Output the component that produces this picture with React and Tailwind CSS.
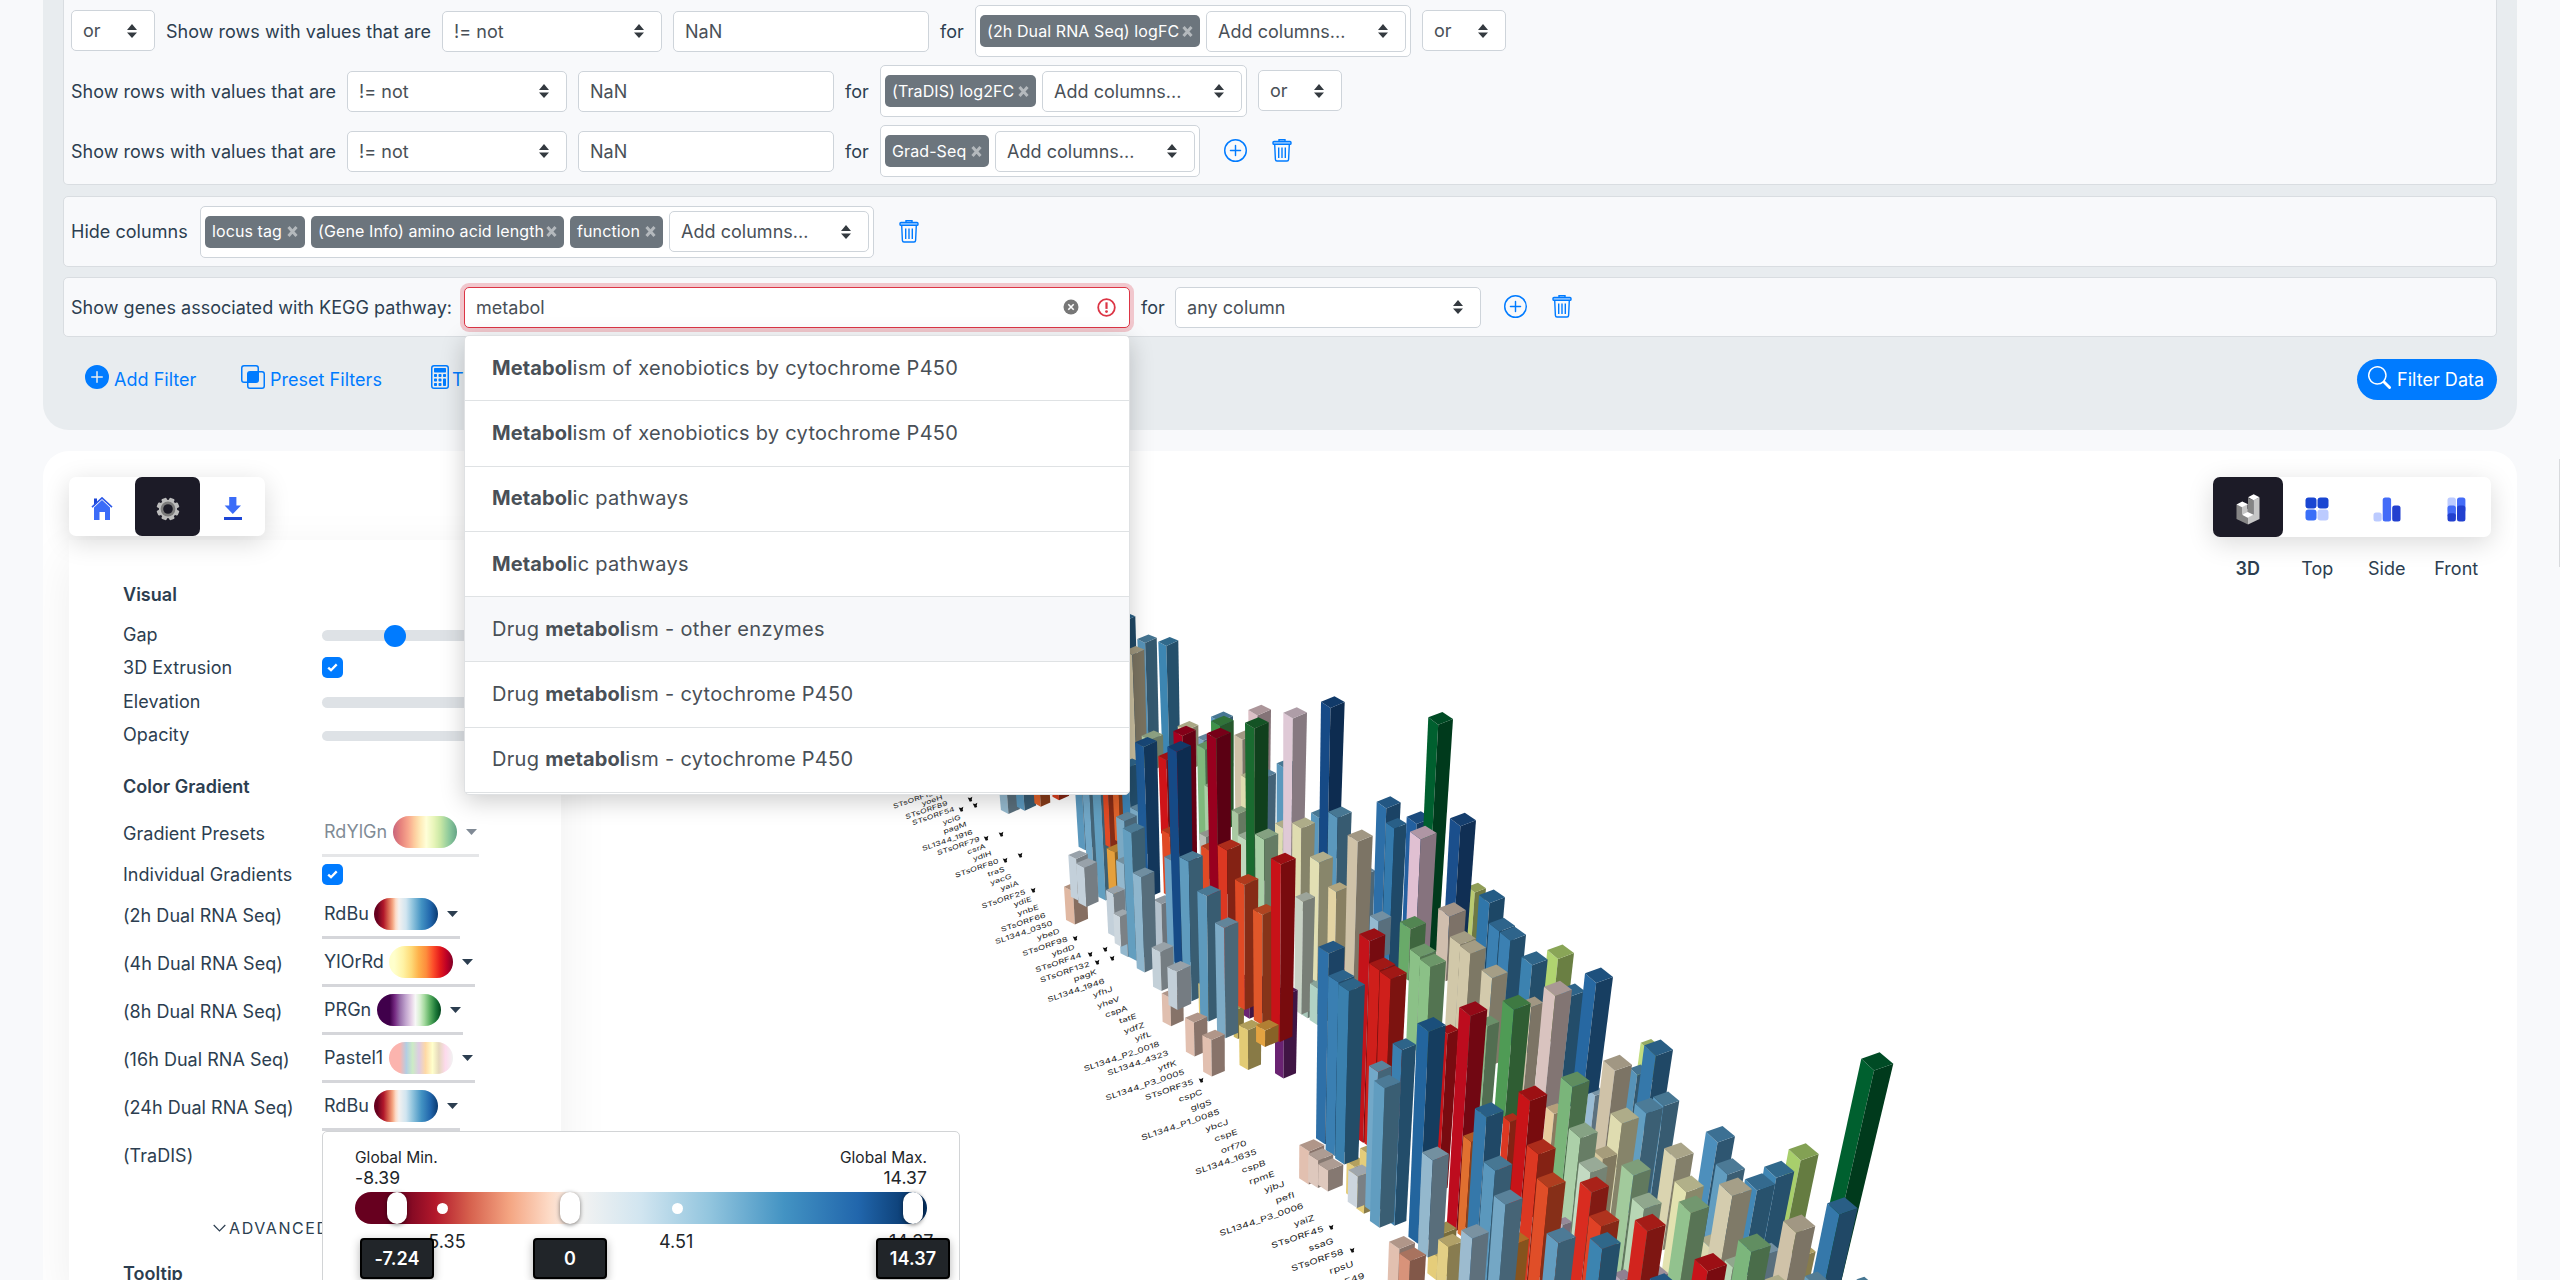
import React from "react";
import { BsPlusCircle, BsPlusCircleFill, BsIntersect, BsCalculator, BsSearch } from "react-icons/bs";

function Sorter() {
  return (
    <svg width="10" height="14" viewBox="0 0 10 14" className="mr-px shrink-0">
      <path d="M0 6L5 0L10 6Z M0 8.5L5 14L10 8.5Z" fill="#343a40" />
    </svg>
  );
}

function Select({ children, className }) {
  return (
    <div className={"flex h-[41px] shrink-0 items-center justify-between rounded-[5px] border border-[#ced4da] bg-white pl-[11px] pr-4 text-[#495057] " + className}>
      <span>{children}</span>
      <Sorter />
    </div>
  );
}

function TextInput() {
  return (
    <div className="flex h-[41px] w-64 shrink-0 items-center rounded-[5px] border border-[#ced4da] bg-white pl-[11px] text-[#495057]">NaN</div>
  );
}

function Tag({ children, className }) {
  return (
    <div className={"flex h-8 shrink-0 items-center justify-between whitespace-nowrap rounded-[5px] bg-[#6c757d] px-[7px] text-[16px] tracking-[0.1px] text-white " + className}>
      <span>{children}</span>
      <svg width="11" height="13" viewBox="0 0 11 13" className="shrink-0">
        <path d="M1.5 2L9.5 11M9.5 2L1.5 11" stroke="#b4b9bd" strokeWidth="3" />
      </svg>
    </div>
  );
}

function TagBox({ children }) {
  return (
    <div className="flex h-[52px] shrink-0 items-center gap-[6px] rounded-[5px] border border-[#ced4da] bg-white px-1">
      {children}
      <Select className="w-[200px]">Add columns...</Select>
    </div>
  );
}

function Trash() {
  return (
    <svg width="20" height="23" viewBox="0 0 20 23" fill="none" stroke="#007bff" strokeWidth="1.4">
      <path d="M7 2.2V.8h6v1.4" />
      <rect x="1" y="2.4" width="18" height="3" rx="1" fill="#7dbbff" />
      <path d="M2.7 5.5L3.4 20.4Q3.5 22 5 22H15Q16.5 22 16.6 20.4L17.3 5.5" />
      <path d="M6.7 8.5V19M10 8.5V19M13.3 8.5V19" />
    </svg>
  );
}

const SENTENCE = "Show rows with values that are";

function Sentence() {
  return (
    <>
      <span className="w-[265px] shrink-0 whitespace-nowrap">{SENTENCE}</span>
      <Select className="w-[220px]">!= not</Select>
      <TextInput />
      <span className="w-[24px] shrink-0">for</span>
    </>
  );
}

function Filters() {
  return (
    <section className="flex h-[430px] flex-col rounded-b-[26px] bg-[#e8ecef] px-5">
      <div className="h-[185px] rounded-b-[5px] border border-t-0 border-[#d9dde1] bg-[#f8f9fb] px-[7px] pt-px">
        <div className="flex h-[60px] items-center gap-[11px]">
          <Select className="-mt-px w-[84px]">or</Select>
          <Sentence />
          <TagBox><Tag className="w-[220px]">(2h Dual RNA Seq) logFC</Tag></TagBox>
          <Select className="-mt-px w-[84px]">or</Select>
        </div>
        <div className="flex h-[60px] items-center gap-[11px]">
          <Sentence />
          <TagBox><Tag className="w-[151px]">(TraDIS) log2FC</Tag></TagBox>
          <Select className="-mt-px w-[84px]">or</Select>
        </div>
        <div className="flex h-[60px] items-center gap-[11px]">
          <Sentence />
          <TagBox><Tag className="w-[104px]">Grad-Seq</Tag></TagBox>
          <div className="-mt-[2px] ml-[13px] flex items-center gap-[25px]"><BsPlusCircle size={23} color="#007bff" /><Trash /></div>
        </div>
      </div>
      <div className="mt-[11px] flex h-[71px] items-center gap-[12px] rounded-[5px] border border-[#d9dde1] bg-[#f8f9fb] px-[7px]">
        <span className="w-[117px] whitespace-nowrap">Hide columns</span>
        <TagBox>
          <Tag className="w-[100px]">locus tag</Tag>
          <Tag className="w-[253px]">(Gene Info) amino acid length</Tag>
          <Tag className="w-[93px]">function</Tag>
        </TagBox>
        <div className="ml-[13px]"><Trash /></div>
      </div>
      <div className="relative mt-[10px] flex h-[60px] items-center gap-[11px] rounded-[5px] border border-[#d9dde1] bg-[#f8f9fb] px-[7px]">
        <span className="w-[382px] shrink-0 whitespace-nowrap">Show genes associated with KEGG pathway:</span>
        <div className="flex h-[41px] w-[666px] shrink-0 items-center rounded-[5px] border-[1.5px] border-[#dc3545] bg-white pl-[11px] pr-[13px] text-[#495057] ring-4 ring-[#dc3545]/25">
          <span className="grow">metabol</span>
          <svg width="16" height="16" viewBox="0 0 16 16"><circle cx="8" cy="8" r="7.5" fill="#777" /><path d="M5.3 5.3l5.4 5.4M10.7 5.3l-5.4 5.4" stroke="#fff" strokeWidth="1.6" /></svg>
          <svg width="19" height="19" viewBox="0 0 19 19" className="ml-[18px]"><circle cx="9.5" cy="9.5" r="8.3" fill="none" stroke="#dc3545" strokeWidth="1.8" /><path d="M9.5 4.3v6.6" stroke="#dc3545" strokeWidth="2.2" /><circle cx="9.5" cy="13.6" r="1.4" fill="#dc3545" /></svg>
        </div>
        <span className="w-[23px]">for</span>
        <Select className="w-[306px]">any column</Select>
        <div className="-mt-[2px] ml-[12px] flex items-center gap-[25px]"><BsPlusCircle size={23} color="#007bff" /><Trash /></div>
        <Suggestions />
      </div>
      <div className="mt-[21px] flex h-[42px] items-center pl-[22px] text-[#007bff]">
        <div className="flex w-[156px] items-center gap-[5px]"><BsPlusCircleFill size={24} className="-mt-1" />Add Filter</div>
        <div className="flex w-[187px] items-center gap-[5px]"><BsIntersect size={24} className="-mt-1" />Preset Filters</div>
        <div className="flex grow items-center"><BsCalculator size={24} className="-mt-1" />T</div>
        <div className="flex h-[41px] w-[140px] items-center gap-[6px] rounded-full bg-[#007bff] pl-[11px] text-white"><BsSearch size={23} className="-mt-1 shrink-0" /><span className="whitespace-nowrap">Filter Data</span></div>
      </div>
    </section>
  );
}

const SUGGESTIONS = [
  ["", "Metabol", "ism of xenobiotics by cytochrome P450"],
  ["", "Metabol", "ism of xenobiotics by cytochrome P450"],
  ["", "Metabol", "ic pathways"],
  ["", "Metabol", "ic pathways"],
  ["Drug ", "metabol", "ism - other enzymes"],
  ["Drug ", "metabol", "ism - cytochrome P450"],
  ["Drug ", "metabol", "ism - cytochrome P450"],
];

function Suggestions() {
  return (
    <div className="absolute left-[400px] top-[57px] z-20 w-[666px] overflow-hidden rounded-[5px] border border-[#dfe1e3] bg-white pb-px text-[20px] tracking-[0.29px] text-[#495057] shadow-[0_6px_24px_rgba(0,0,0,0.2)]">
      {SUGGESTIONS.map(([before, hit, after], i) => (
        <div key={i} className={"flex h-[65.3px] items-center whitespace-pre border-b border-[#dfe2e4] pl-[27px] " + (i === 4 ? "bg-[#f7f8fa]" : "")}>
          {before}<b className="font-bold tracking-[0.1px]">{hit}</b>{after}
        </div>
      ))}
    </div>
  );
}

/* ---------- 3D bar scene ---------- */

// Bars are [left, top, width, base, colour], listed from back to front.
// Each cluster has its own origin and counts three units to a pixel.
const CLUSTERS = [
  { ox: 860, oy: 580, bars: [
    [410, 540, 60, 690, "#94b8cd"], [460, 540, 60, 680, "#5b98bd"],
    [514, 540, 50, 670, "#e0622b"], [570, 540, 52, 650, "#d9401f"],
    [640, 540, 55, 800, "#5b98bd"], [662, 540, 55, 880, "#72a8c8"], [692, 540, 64, 950, "#629fc0"],
    [612, 920, 68, 1020, "#e0b8a2"], [625, 825, 58, 950, "#c3d0da"], [648, 850, 63, 968, "#c3d0da"],
    [748, 540, 55, 860, "#e04a25"], [755, 808, 55, 940, "#e5a03c"],
  ] },
  { ox: 1110, oy: 600, bars: [
    [18, 52, 58, 500, "#3578a8"], [82, 117, 58, 500, "#5793b8"], [145, 125, 60, 500, "#3d86b2"],
    [43, 152, 60, 490, "#cbc0a0"], [262, 412, 45, 560, "#7fabc8"], [303, 350, 66, 600, "#5b98bd"],
    [415, 330, 68, 700, "#dcc0c6"], [203, 378, 62, 500, "#dad7ac"], [95, 407, 64, 500, "#b2cca6"],
    [440, 520, 58, 740, "#6fa3c4"], [500, 490, 60, 740, "#5b98bd"],
    [373, 405, 60, 700, "#cfc2a8"], [392, 525, 60, 700, "#dfdcb0"], [261, 435, 62, 720, "#7fb87c"],
    [303, 363, 68, 680, "#3f9249"], [283, 555, 55, 740, "#a9cfa6"],
    [-22, 570, 42, 735, "#e04a25"], [8, 570, 45, 720, "#e0622b"], [-10, 745, 60, 870, "#e5a03c"],
    [145, 468, 60, 700, "#cf1418"], [190, 393, 67, 780, "#a8001f"], [32, 490, 60, 760, "#3b80b0"],
    [60, 622, 60, 760, "#7aa9c4"], [18, 650, 62, 1000, "#7aa9c4"], [130, 900, 60, 1060, "#b4c2cd"],
    [155, 690, 60, 880, "#e04a25"], [75, 427, 66, 880, "#1f5b97"], [268, 700, 50, 830, "#b8bdb5"],
    [365, 630, 50, 830, "#a9c9a2"], [383, 705, 64, 850, "#c0d8bd"], [273, 738, 60, 880, "#e04a25"],
    [290, 400, 72, 880, "#98001f"], [405, 368, 71, 840, "#1a6b30"],
    [495, 670, 60, 790, "#dfdcb0"], [520, 338, 71, 780, "#dfc9d6"],
    [603, 638, 60, 780, "#5b98bd"], [633, 305, 71, 770, "#164a86"], [655, 635, 70, 880, "#5b98bd"],
    [435, 702, 70, 930, "#a9cfa6"], [547, 668, 68, 920, "#dfdcb0"],
    [600, 770, 69, 1160, "#e2dfb3"], [655, 860, 60, 1100, "#e3d3a3"],
    [665, 1095, 65, 1200, "#b8a0a2"], [745, 810, 50, 1000, "#7fabc8"],
    [800, 605, 72, 1000, "#2d6fa8"], [828, 668, 62, 1150, "#347aad"], [890, 650, 75, 1040, "#2360a0"],
    [955, 352, 74, 1050, "#00602f"], [900, 695, 80, 1070, "#e0c0d2"],
    [1072, 860, 56, 1020, "#b9ca70"], [1020, 655, 78, 1010, "#1b4f8c"],
    [1107, 885, 78, 1200, "#3076aa"], [1137, 970, 78, 1260, "#3b80b2"], [1170, 997, 78, 1320, "#3b80b2"],
    [1312, 1050, 80, 1300, "#b0d470"], [1235, 1070, 78, 1340, "#3c82b0"],
    [780, 947, 64, 1060, "#94b9d0"], [920, 1060, 65, 1100, "#94b9d0"],
    [713, 705, 75, 1150, "#cfc2a8"],
    [985, 925, 83, 1120, "#d0beae"], [1020, 1010, 78, 1330, "#d1c8a9"], [1050, 1037, 78, 1380, "#d1c8a9"],
    [870, 965, 78, 1120, "#69aa69"], [900, 1048, 78, 1330, "#8bc187"], [930, 1078, 78, 1380, "#8bc187"],
    [1115, 1110, 78, 1380, "#d3caac"],
    [18, 780, 60, 1060, "#94b8cd"], [-12, 870, 56, 1000, "#c3d0da"], [10, 940, 50, 1030, "#cdd7de"],
    [38, 685, 66, 1070, "#639ebf"], [68, 818, 65, 1105, "#8fb6cd"],
    [163, 770, 60, 1100, "#6ca2c4"], [172, 440, 71, 1085, "#164a86"], [208, 770, 70, 1190, "#5f9bbe"],
    [155, 1180, 65, 1265, "#e0bfaf"], [265, 1150, 60, 1250, "#e5cd7a"],
    [125, 1042, 65, 1160, "#c3d0d8"], [172, 1100, 70, 1215, "#c3cfd8"],
    [390, 1130, 70, 1240, "#6a2372"], [370, 1220, 32, 1310, "#cdb860"],
    [323, 735, 70, 1180, "#dc3822"], [375, 838, 70, 1215, "#e04a25"], [429, 928, 70, 1260, "#e0572a"],
    [570, 1150, 60, 1240, "#a6c6b8"], [555, 890, 60, 1230, "#c8d2c5"],
    [600, 1150, 60, 1260, "#b1d2c4"],
    [262, 873, 70, 1250, "#5e9abd"], [315, 968, 70, 1300, "#7dabc6"],
    [495, 1170, 68, 1420, "#6a2372"],
    [387, 1275, 67, 1395, "#e2cb75"], [483, 775, 74, 1310, "#c81218"], [438, 1275, 68, 1325, "#e3a341"],
    [225, 1253, 67, 1355, "#e2c0b0"], [277, 1305, 67, 1415, "#e2c0b0"],
  ] },
  { ox: 1400, oy: 1020, bars: [
    [485, -95, 70, 250, "#3b80b0"], [565, 210, 50, 330, "#9abcd4"], [555, -140, 84, 200, "#2768a2"],
    [370, -58, 60, 260, "#cfc2a8"], [432, -100, 84, 240, "#d9c3bf"],
    [238, 0, 60, 300, "#88b887"], [308, -58, 84, 290, "#4f9b55"],
    [722, 68, 55, 170, "#c2dd80"], [690, 145, 55, 350, "#5793b8"], [733, 76, 86, 300, "#3578aa"],
    [760, 230, 78, 560, "#5b98bd"], [705, 250, 84, 560, "#629ec1"], [610, 122, 86, 430, "#cfc2a8"],
    [438, 262, 60, 430, "#e8cc9e"], [632, 280, 85, 600, "#dfdcb0"], [580, 392, 72, 620, "#d5c89e"],
    [483, 172, 86, 520, "#7ab57a"], [507, 325, 86, 640, "#acd0a9"], [537, 428, 86, 700, "#c3dac2"],
    [918, 335, 87, 640, "#4d8fbc"], [948, 432, 87, 700, "#629dc0"],
    [793, 385, 88, 660, "#dad4b0"], [824, 484, 88, 800, "#e3e2b0"],
    [1166, 388, 90, 680, "#a8cf6c"], [1384, 116, 96, 860, "#00602f"],
    [1093, 440, 90, 740, "#3f86b4"], [1035, 478, 90, 740, "#4388b6"],
    [1080, 680, 60, 800, "#94b9d0"], [900, 655, 78, 790, "#dcd9b0"], [958, 492, 98, 760, "#d4ccae"],
    [310, 290, 50, 560, "#dc3822"], [356, 215, 86, 580, "#c81418"], [381, 375, 86, 760, "#dc3822"],
    [470, 600, 45, 700, "#c0b0c4"], [411, 475, 86, 850, "#e04e28"],
    [665, 435, 88, 790, "#a2ca9c"], [697, 535, 88, 850, "#b8d6b5"],
    [540, 487, 87, 850, "#d92c20"], [568, 588, 90, 850, "#e04226"],
    [640, 760, 60, 850, "#b8a4ba"], [745, 750, 60, 850, "#c8b6c4"],
    [1185, 685, 62, 850, "#e0cd80"], [975, 720, 60, 850, "#b8d6b5"], [1150, 603, 96, 850, "#cfc2a8"],
    [1015, 660, 98, 850, "#7cb67c"], [836, 545, 92, 850, "#92c28e"], [705, 600, 92, 850, "#d2241e"],
    [884, 718, 97, 850, "#c8131a"], [1282, 550, 91, 880, "#3578aa"], [1215, 768, 66, 850, "#6a9fbe"],
    [1095, 778, 70, 850, "#dfdcb0"], [1370, 778, 40, 850, "#5b98bd"],
    [-122, -258, 78, 350, "#c4131a"], [-92, -170, 78, 370, "#cf1f1b"], [-60, -145, 80, 400, "#cf1f1b"],
    [-160, 425, 60, 520, "#e5cd7a"], [-120, 385, 60, 460, "#e5cd7a"],
    [-245, -220, 79, 355, "#2e70a8"], [-215, -133, 78, 390, "#3a7fb2"], [-185, -108, 80, 415, "#3a80ae"],
    [-302, 375, 75, 475, "#e2c0b0"], [-275, 402, 75, 485, "#dec8bd"], [-245, 432, 75, 495, "#dec8bd"],
    [-130, 490, 60, 565, "#e5cd7a"], [-155, 450, 72, 545, "#ccd5de"],
    [-93, 137, 68, 560, "#72a8c8"], [-22, 70, 70, 600, "#3b80b0"], [-78, 182, 80, 603, "#619dc0"],
    [120, 25, 56, 500, "#c8131a"], [178, -38, 84, 610, "#bd0c1e"],
    [100, 620, 70, 740, "#c8b464"], [85, 690, 70, 760, "#e5cd7a"],
    [190, 347, 60, 640, "#e07030"], [52, 10, 85, 650, "#23659e"], [66, 397, 81, 690, "#94b8cd"],
    [325, 650, 62, 850, "#e08a30"], [225, 265, 86, 820, "#3578aa"], [251, 425, 86, 850, "#5b98bd"],
    [282, 527, 86, 850, "#74a7c5"], [115, 658, 76, 850, "#e3cf85"],
    [184, 630, 82, 850, "#9cbbcf"], [440, 640, 87, 850, "#639dc0"], [570, 655, 92, 850, "#3c84b0"],
    [750, 775, 76, 850, "#2e70a8"],
    [-33, 665, 78, 850, "#e2c0b0"], [-2, 700, 80, 850, "#d8937a"],
  ] },
];

function shade(hex, k) {
  const n = parseInt(hex.slice(1), 16);
  return "rgb(" + [n >> 16, (n >> 8) & 255, n & 255].map((v) => Math.round(v * k)).join(",") + ")";
}

// Side-corner drop of the top face, interpolated along the screen's width.
function tilt(x) {
  const t = Math.min(Math.max((x - 1150) / 500, 0), 1);
  return { right: -0.06 + 0.22 * t, front: 0.21 + 0.16 * t, back: -0.24 + 0.04 * t };
}

function lean(x) {
  return x < 1430 ? -(x - 1277) * 0.0003 : -0.046 - (x - 1430) * 0.0004;
}

function Bar({ x, y, w, base, color }) {
  const a = tilt(x);
  const h = base - y;
  const s = lean(x) * h;
  const taper = 1 - Math.min((0.02 * h) / w, 0.25);
  const L = [x, y];
  const B = [x + 0.57 * w, y + a.back * w];
  const R = [x + w, y + a.right * w];
  const F = [x + 0.4 * w, y + a.front * w];
  const L2 = [x + s, base];
  const R2 = [x + s + w * taper, base + a.right * w * taper];
  const F2 = [x + s + 0.4 * w * taper, base + a.front * w * taper];
  const p = (...pts) => pts.map((q) => q[0].toFixed(1) + "," + q[1].toFixed(1)).join(" ");
  return (
    <g>
      <polygon points={p(L, F, F2, L2)} fill={color} />
      <polygon points={p(F, R, R2, F2)} fill={shade(color, 0.6)} />
      <polygon points={p(L, B, R, F)} fill={shade(color, 0.78)} />
    </g>
  );
}

// Gene labels as [name, right end, baseline].
const LABELS = [
  ["STsORF131", 937, 794], ["yoeH", 943, 799], ["STsORF89", 948, 805], ["STsORF54", 955, 811], ["yciG", 961, 819], ["pagM", 967, 826],
  ["SL1344_1916", 973, 834], ["STsORF79", 980, 841], ["csrA", 986, 848], ["ydiH", 992, 855], ["STsORF80", 999, 863],
  ["traS", 1005, 871], ["yacG", 1012, 878], ["yaiA", 1019, 885], ["STsORF25", 1026, 894], ["ydiE", 1032, 901],
  ["ynbE", 1039, 909], ["STsORF66", 1046, 917], ["SL1344_0350", 1053, 925], ["ybeD", 1060, 933], ["STsORF98", 1068, 941],
  ["ybdD", 1075, 949], ["STsORF44", 1082, 957], ["STsORF132", 1090, 966], ["pagK", 1097, 974],
  ["SL1344_1946", 1105, 983], ["yfhJ", 1113, 991], ["yheV", 1120, 1001], ["cspA", 1128, 1010], ["tatE", 1137, 1018],
  ["ydfZ", 1145, 1027], ["yifL", 1152, 1036], ["SL1344_P2_0018", 1160, 1046], ["SL1344_4323", 1169, 1055], ["ytfK", 1177, 1065],
  ["SL1344_P3_0005", 1185, 1074], ["STsORF35", 1194, 1084], ["cspC", 1203, 1094], ["glgS", 1212, 1104], ["SL1344_P1_0085", 1220, 1114],
  ["ybcJ", 1229, 1124], ["cspE", 1238, 1134], ["orf70", 1247, 1145], ["SL1344_1635", 1257, 1154], ["cspB", 1266, 1165],
  ["rpmE", 1275, 1176], ["yjbJ", 1285, 1186], ["pefI", 1295, 1197], ["SL1344_P3_0006", 1304, 1208], ["yaiZ", 1315, 1220],
  ["STsORF45", 1324, 1231], ["ssaG", 1334, 1243], ["STsORF58", 1344, 1254], ["rpsU", 1354, 1266], ["STsORF49", 1365, 1278],
];

const MARKS = [
  [970, 799], [961, 809], [975, 805], [986, 838], [1001, 834], [1005, 860], [1020, 855], [1033, 890], [1069, 909],
  [1075, 938], [1090, 954], [1105, 949], [1097, 962], [1112, 958], [1201, 1080], [1331, 1227], [1352, 1250],
];

function Scene() {
  return (
    <svg className="pointer-events-none absolute left-0 top-0" width="2474" height="829" viewBox="43 451 2474 829">
      <g fontFamily="Inter, sans-serif" fill="#222" fontWeight="400">
        {LABELS.map(([name, x, y]) => (
          <text key={name} fontSize={6.1 + (y - 790) * 0.0034} textAnchor="end" transform={"matrix(1.36 -0.46 0.25 1 " + x + " " + y + ")"}>{name}</text>
        ))}
      </g>
      <g fill="#111">
        {MARKS.map(([x, y]) => (
          <path key={x + "-" + y} d={"M" + (x - 2.3) + " " + (y - 1.5) + "l2.4 .6 2.2-1.4-.6 3 .5 1.2-2.4.9z"} />
        ))}
      </g>
      {CLUSTERS.map((c, i) => (
        <g key={i}>
          {c.bars.map(([x, y, w, base, color], j) => (
            <Bar key={j} x={c.ox + x / 3} y={c.oy + y / 3} w={w / 3} base={c.oy + base / 3} color={color} />
          ))}
        </g>
      ))}
    </svg>
  );
}

/* ---------- Settings ---------- */

const RDBU = "bg-[linear-gradient(90deg,#67001f_5%,#b2182b_15%,#d6604d_22%,#f4a582_29%,#fddbc7_34%,#f3f1f0_39%,#d1e5f0_50%,#92c5de_60%,#4393c3_74%,#2166ac_88%,#0a3a70_100%)]";
const RAMPS = [
  ["(2h Dual RNA Seq)", "RdBu", RDBU],
  ["(4h Dual RNA Seq)", "YlOrRd", "bg-[linear-gradient(90deg,#ffffcc_8%,#fff3a5_22%,#fed976_35%,#feb24c_46%,#fd8d3c_58%,#fc4e2a_69%,#e31a1c_80%,#bd0026_90%,#800026_100%)]"],
  ["(8h Dual RNA Seq)", "PRGn", "bg-[linear-gradient(90deg,#40004b_20%,#762a83_28%,#9970ab_36%,#c2a5cf_45%,#e7d4e8_54%,#f7f7f7_60%,#d9f0d3_67%,#a6dba0_74%,#5aae61_83%,#1b7837_92%,#00441b_100%)]"],
  ["(16h Dual RNA Seq)", "Pastel1", "bg-[linear-gradient(90deg,#fbb4ae_17%,#b3cde3_27%,#ccebc5_37%,#decbe4_47%,#fed9a6_57%,#ffffcc_68%,#e5d8bd_78%,#fddaec_88%,#f2f2f2_100%)]"],
  ["(24h Dual RNA Seq)", "RdBu", RDBU],
];

function Ramp({ name, ramp, className }) {
  return (
    <div className={"flex h-[47px] items-center border-b-[3px] border-[#d5d6da] pl-[2px] pr-[2px] " + className}>
      <span className="mb-px">{name}</span>
      <span className={"ml-[5.5px] h-8 w-16 rounded-full " + ramp} />
      <svg width="11" height="6" viewBox="0 0 11 6" className="ml-[9px]"><path d="M0 0H11L5.5 6Z" fill="#2c3e50" /></svg>
    </div>
  );
}

function Check() {
  return (
    <span className="flex size-[21px] items-center justify-center rounded-[5px] bg-[#007bff]">
      <svg width="11" height="9" viewBox="0 0 11 9"><path d="M1.2 4.6L4 7.2L9.7 1.4" fill="none" stroke="#fff" strokeWidth="2.3" /></svg>
    </span>
  );
}

function Row({ label, className = "h-[33.5px]", children }) {
  return (
    <div className={"flex items-center " + className}>
      <span className="w-[199px] shrink-0">{label}</span>
      {children}
    </div>
  );
}

function Track({ thumb }) {
  return (
    <div className="relative mt-[2px] h-[10.5px] w-[180px] rounded-full bg-[#dee2e6]">
      {thumb && <span className="absolute -top-[5px] left-[62px] size-[22px] rounded-full bg-[#007bff]" />}
    </div>
  );
}

function Settings() {
  return (
    <div className="relative z-10 h-[760px] w-[492px] bg-white pl-[54px] pt-[38px] shadow-[0_16px_48px_rgba(0,0,0,0.07)]">
      <h3 className="h-[34px] font-semibold leading-[34px]">Visual</h3>
      <div className="mt-[5.5px]">
        <Row label="Gap"><Track thumb /></Row>
        <Row label="3D Extrusion"><Check /></Row>
        <Row label="Elevation"><Track /></Row>
        <Row label="Opacity"><Track /></Row>
      </div>
      <h3 className="mt-[18.5px] h-[34px] font-semibold leading-[34px]">Color Gradient</h3>
      <Row label="Gradient Presets" className="mt-[5px] h-[48px]">
        <Ramp name="RdYlGn" className="opacity-60" ramp="bg-[linear-gradient(90deg,#a50026,#d73027_12%,#f46d43_24%,#fdae61_34%,#fee08b_43%,#ffffbf_52%,#d9ef8b_64%,#a6d96a_74%,#3fa55a_88%,#006837)]" />
      </Row>
      <Row label="Individual Gradients" className="h-[34px]"><Check /></Row>
      {RAMPS.map(([label, name, ramp]) => (
        <Row key={label} label={label} className="h-[48px]"><Ramp name={name} ramp={ramp} className="" /></Row>
      ))}
      <Row label="(TraDIS)" className="h-[48px]" />
      <div className="mt-[34px] flex h-[30px] items-center gap-[3px] pl-[90px] text-[16px] tracking-[1.6px]">
        <svg width="13" height="8" viewBox="0 0 13 8"><path d="M.7 1L6.5 7L12.3 1" fill="none" stroke="#2c3e50" strokeWidth="1.2" /></svg>
        ADVANCED
      </div>
      <h3 className="mt-[14px] h-[34px] font-semibold leading-[34px]">Tooltip</h3>
      <RangePopover />
    </div>
  );
}

function Handle({ className, value }) {
  return (
    <div className={"absolute top-0 flex w-[74px] flex-col items-center " + className}>
      <span className="h-8 w-5 rounded-full bg-white shadow-[0_1px_4px_rgba(0,0,0,0.5)]" />
      <span className="mt-[14px] flex h-[41px] w-[74px] items-center justify-center rounded-[4px] border-2 border-black bg-[#212529] text-[18px] font-semibold text-white shadow-[0_3px_10px_rgba(0,0,0,0.3)]">{value}</span>
    </div>
  );
}

function RangePopover() {
  return (
    <div className="absolute left-[253px] top-[591px] h-[200px] w-[638px] rounded-[5px] border border-[#d2d4d6] bg-white px-8 pt-[16px] text-[#212529]">
      <div className="flex justify-between text-[15.5px] leading-[20px]">
        <div>Global Min.<div className="text-[17.5px] tracking-[0.1px]">-8.39</div></div>
        <div className="text-right">Global Max.<div className="text-[17.5px] tracking-[0.1px]">14.37</div></div>
      </div>
      <div className="relative mt-[4px] h-8 w-[572px] rounded-full bg-[linear-gradient(90deg,#67001f_7%,#b2182b_14%,#d6604d_20%,#f4a582_27%,#fddbc7_34%,#f4f3f2_39%,#d1e5f0_50%,#92c5de_62%,#4393c3_75%,#2166ac_88%,#053061_99%)]">
        <span className="absolute left-[82px] top-[11px] size-[11px] rounded-full bg-white" />
        <span className="absolute left-[317px] top-[11px] size-[11px] rounded-full bg-white" />
        <span className="absolute left-[65px] top-[38px] text-[18px] leading-6">-5.35</span>
        <span className="absolute left-[304px] top-[38px] text-[18px] leading-6">4.51</span>
        <span className="absolute left-[534px] top-[38px] text-[18px] leading-6">14.37</span>
        <Handle className="left-[5px]" value="-7.24" />
        <Handle className="left-[178px]" value="0" />
        <Handle className="left-[521px]" value="14.37" />
      </div>
    </div>
  );
}

function HomeIcon() {
  return (
    <svg width="22" height="23" viewBox="0 0 22 23">
      <path d="M3 1.5H6V6L3 9Z" fill="#1c46d6" />
      <path d="M1 10.2L11 .9L21 10.2" fill="none" stroke="#2b57e8" strokeWidth="1.6" />
      <path d="M11 3L19 10.5V23H14V15H8.5V23H3V10.5Z" fill="#3b6cf8" />
    </svg>
  );
}

function GearIcon() {
  return (
    <svg width="24" height="24" viewBox="0 0 24 24">
      <g fill="#bcbcbc">
        {[0, 45, 90, 135].map((a) => <rect key={a} x="9.3" y=".6" width="5.4" height="22.8" rx="1.2" transform={"rotate(" + (a + 22.5) + " 12 12)"} />)}
        <circle cx="12" cy="12" r="9.2" />
      </g>
      <circle cx="12" cy="12" r="7.4" fill="#7c7c7c" />
      <circle cx="12" cy="12" r="4.8" fill="#1c1b27" />
    </svg>
  );
}

function DownloadIcon() {
  return (
    <svg width="18" height="23" viewBox="0 0 18 23">
      <path d="M5.2 0h7.2v8.5H17L8.8 17L.6 8.5H5.2Z" fill="#3b6cf8" />
      <rect y="20" width="18" height="3" fill="#1c46d6" />
    </svg>
  );
}

function CubeIcon() {
  return (
    <svg width="24" height="31" viewBox="0 0 24 31">
      <path d="M.5 10.5L12 15V30.5L.5 25Z" fill="#858585" /><path d="M12 4L17.5 6V24L12 20Z" fill="#858585" />
      <path d="M6 12.8L11.5 10V20L6 20Z" fill="#c6c6c6" /><path d="M17.5 6L23.5 3.5V25L12 30.5V23L17.5 20.5Z" fill="#c6c6c6" />
      <path d="M.5 10.5L6.3 7.5L12 10.2L6 13.2Z" fill="#fff" /><path d="M12 3.2L17.7 .3L23.5 3.2L17.7 6.2Z" fill="#fff" /><path d="M6 20.7L11.7 18L17.5 20.7L11.7 23.7Z" fill="#fff" />
    </svg>
  );
}

const VIEWS = [
  ["3D", <CubeIcon />],
  ["Top", <svg width="24" height="24" viewBox="0 0 24 24"><rect x=".5" y=".5" width="11" height="11" rx="3" fill="#1946d2" /><rect x="12.5" y=".5" width="11" height="11" rx="3" fill="#1946d2" /><rect x=".5" y="12.5" width="11" height="11" rx="3" fill="#3a6ff8" /><rect x="12.5" y="12.5" width="11" height="11" rx="3" fill="#bccbff" /></svg>],
  ["Side", <svg width="28" height="25" viewBox="0 0 28 25"><rect x=".5" y="15.5" width="8.2" height="9" rx="2.5" fill="#bccbff" /><rect x="9.7" y=".5" width="8.4" height="24" rx="2.5" fill="#446cf8" /><rect x="19.2" y="8.5" width="8.3" height="16" rx="2.5" fill="#2240cf" /></svg>],
  ["Front", <svg width="19" height="25" viewBox="0 0 19 25"><rect x=".5" y=".5" width="8.4" height="15" rx="2.5" fill="#bccbff" /><rect x=".5" y="8.5" width="8.4" height="12" rx="2.5" fill="#446cf8" /><rect x=".5" y="16.3" width="8.4" height="8.2" rx="2.5" fill="#2240cf" /><rect x="10" y=".5" width="8.4" height="15" rx="2.5" fill="#446cf8" /><rect x="10" y="8.5" width="8.4" height="16" rx="2.5" fill="#2240cf" /></svg>],
];

function Viewer() {
  return (
    <section className="relative mt-[21px] flex h-[829px] flex-col overflow-hidden rounded-t-[26px] bg-white pl-[26px] pr-[26px] pt-[26px]">
      <Scene />
      <div className="relative z-20 flex h-[63px] items-start justify-between">
        <div className="flex h-[59px] w-[196px] rounded-[7px] bg-white shadow-[0_6px_26px_rgba(0,0,0,0.15)]">
          <div className="flex w-[66px] items-center justify-center pt-1"><HomeIcon /></div>
          <div className="flex w-[65px] items-center justify-center rounded-[7px] bg-[#1c1b27] pt-1"><GearIcon /></div>
          <div className="flex w-[65px] items-center justify-center pt-1"><DownloadIcon /></div>
        </div>
        <div className="flex flex-col">
          <div className="flex h-[60px] w-[278px] rounded-[7px] bg-white shadow-[0_6px_26px_rgba(0,0,0,0.15)]">
            {VIEWS.map(([name, icon], i) => (
              <div key={name} className={"flex flex-1 items-center justify-center rounded-[7px] pt-1 " + (i === 0 ? "bg-[#1c1b27]" : "")}>{icon}</div>
            ))}
          </div>
          <div className="mt-[18px] flex w-[278px]">
            {VIEWS.map(([name], i) => (
              <span key={name} className={"flex-1 text-center " + (i === 0 ? "font-semibold" : "")}>{name}</span>
            ))}
          </div>
        </div>
      </div>
      <Settings />
    </section>
  );
}

export default function App() {
  return (
    <div className="relative h-[1280px] w-[2560px] overflow-hidden bg-[#f8f9fb] px-[43px] font-[Inter,sans-serif] text-[18px] leading-[27px] tracking-[0.03px] text-[#2c3e50]">
      <Filters />
      <Viewer />
      <div className="absolute right-0 top-[459px] h-[108px] w-px bg-[#d8dadd]" />
    </div>
  );
}
